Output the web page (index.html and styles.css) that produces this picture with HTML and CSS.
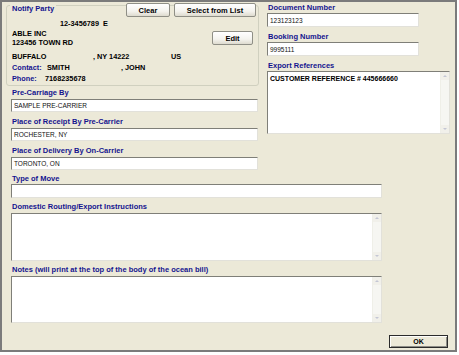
FILE: index.html
```html
<!DOCTYPE html>
<html lang="en">
<head>
    <meta charset="UTF-8">
    <title>Ocean Bill - Parties</title>
    <link rel="stylesheet" href="styles.css">
</head>
<body>
    <div class="window">
        <div class="top">
            <div class="left-col">
                <div class="group">
                    <div class="group-head">
                        <span class="group-title">Notify Party</span>
                        <button class="btn btn-clear">Clear</button>
                        <button class="btn btn-select">Select from List</button>
                    </div>
                    <div class="party-id">12-3456789&nbsp;&nbsp;E</div>
                    <div class="party-name">
                        <div class="addr">
                            <div>ABLE INC</div>
                            <div>123456 TOWN RD</div>
                        </div>
                        <button class="btn btn-edit">Edit</button>
                    </div>
                    <div class="party-rows">
                        <div class="prow">
                            <span class="city">BUFFALO</span>
                            <span class="state">, NY 14222</span>
                            <span>US</span>
                        </div>
                        <div class="prow">
                            <span class="key key-contact">Contact:</span>
                            <span class="last">SMITH</span>
                            <span>, JOHN</span>
                        </div>
                        <div class="prow">
                            <span class="key key-phone">Phone:</span>
                            <span>7168235678</span>
                        </div>
                    </div>
                </div>

                <div class="fields">
                    <label class="lbl first">Pre-Carriage By</label>
                    <div class="field">SAMPLE PRE-CARRIER</div>
                    <label class="lbl">Place of Receipt By Pre-Carrier</label>
                    <div class="field">ROCHESTER, NY</div>
                    <label class="lbl">Place of Delivery By On-Carrier</label>
                    <div class="field">TORONTO, ON</div>
                </div>
            </div>

            <div class="right-col">
                <label class="lbl first">Document Number</label>
                <div class="field short">123123123</div>
                <label class="lbl">Booking Number</label>
                <div class="field short">9995111</div>
                <label class="lbl">Export References</label>
                <div class="area area-refs">
                    <div class="area-text bold">CUSTOMER REFERENCE # 445666660</div>
                    <div class="scroll"><span class="arrow up"></span><span class="arrow down"></span></div>
                </div>
            </div>
        </div>

        <div class="bottom">
            <label class="lbl">Type of Move</label>
            <div class="field wide"></div>
            <label class="lbl">Domestic Routing/Export Instructions</label>
            <div class="area area-routing">
                <div class="area-text"></div>
                <div class="scroll"><span class="arrow up"></span><span class="arrow down"></span></div>
            </div>
            <label class="lbl">Notes (will print at the top of the body of the ocean bill)</label>
            <div class="area area-notes">
                <div class="area-text"></div>
                <div class="scroll"><span class="arrow up"></span><span class="arrow down"></span></div>
            </div>
        </div>

        <div class="actions">
            <button class="btn-ok">OK</button>
        </div>
    </div>
</body>
</html>
```

FILE: styles.css
```css
body {
    margin: 0;
    background: #fff;
    font-family: "Liberation Sans", Arial, sans-serif;
    color: #000;
}
.window {
    width: 453px;
    height: 348px;
    border: 2px solid #7b7b7b;
    background: #ece9d8;
}
.top {
    display: flex;
    padding-top: 1px;
}
.left-col {
    margin-left: 4px;
    width: 253px;
}
.group {
    margin-top: 2px;
    padding-bottom: 1px;
    border: 1px solid #d0d0bf;
    border-radius: 3px;
    font-size: 7.3px;
    font-weight: bold;
}
.group-head {
    display: flex;
    align-items: flex-start;
    height: 14px;
    margin-top: -3px;
}
.group-title {
    margin-left: 3px;
    padding: 0 2px;
    line-height: 12px;
    background: #ece9d8;
    color: #14148f;
    font-size: 7.5px;
}
.btn {
    height: 14px;
    padding: 0;
    border: 1px solid #8f8f86;
    border-radius: 2px;
    background: linear-gradient(#ffffff, #f4f3ee 60%, #dedbcf);
    font-family: "Liberation Sans", Arial, sans-serif;
    font-size: 7.5px;
    font-weight: bold;
    color: #000;
}
.btn-clear {
    margin-left: auto;
    width: 44px;
}
.btn-select {
    width: 82px;
    margin-left: 4px;
    margin-right: 2px;
}
.party-id {
    margin-top: 2px;
    line-height: 10px;
    padding-left: 53px;
}
.party-name {
    display: flex;
    justify-content: space-between;
    align-items: flex-start;
    padding-left: 5px;
    line-height: 9px;
}
.btn-edit {
    width: 41px;
    margin-top: 2px;
    margin-right: 5px;
}
.party-rows {
    margin-top: 4px;
    padding-left: 5px;
}
.prow {
    display: flex;
    line-height: 11px;
}
.city { width: 81px; }
.state { width: 78px; }
.key { color: #14148f; }
.key-contact { width: 35px; }
.key-phone { width: 33px; }
.last { width: 74px; }

.fields {
    margin-left: 5px;
    width: 247px;
}
.lbl {
    display: block;
    margin-top: 5px;
    padding-left: 1px;
    line-height: 10px;
    font-size: 7.5px;
    font-weight: bold;
    color: #14148f;
    white-space: nowrap;
}
.fields .lbl.first { margin-top: 2px; }
.field {
    display: flex;
    align-items: center;
    box-sizing: border-box;
    height: 13px;
    margin-top: 1px;
    padding-left: 2px;
    background: #fff;
    border: 1px solid;
    border-color: #7f7f78 #e2e1da #e2e1da #7f7f78;
    font-size: 6.5px;
    color: #111;
}
.right-col {
    margin-left: 8px;
    width: 184px;
}
.right-col .lbl.first { margin-top: 0; }
.right-col .field {
    margin-top: 0;
    height: 14px;
}
.field.short { width: 152px; }

.area {
    display: flex;
    box-sizing: border-box;
    background: #fff;
    border: 1px solid;
    border-color: #7f7f78 #e2e1da #e2e1da #7f7f78;
}
.area-text {
    flex: 1;
    padding: 3px 2px;
    font-size: 7px;
    line-height: 8px;
}
.bold { font-weight: bold; }
.scroll {
    display: flex;
    flex-direction: column;
    justify-content: space-between;
    width: 8px;
    background: #f6f6f2;
    border-left: 1px solid #efefe8;
}
.arrow {
    display: block;
    height: 8px;
    background: #f1f0ea;
    position: relative;
}
.arrow::after {
    content: "";
    position: absolute;
    left: 2px;
    border-left: 2px solid transparent;
    border-right: 2px solid transparent;
}
.arrow.up::after {
    top: 3px;
    border-bottom: 2px solid #c4c6d4;
}
.arrow.down::after {
    top: 3px;
    border-top: 2px solid #c4c6d4;
}
.area-refs {
    width: 183px;
    height: 63px;
}
.bottom {
    padding-left: 9px;
}
.bottom .lbl { margin-top: 4px; }
.field.wide {
    width: 371px;
    height: 14px;
    margin-top: 0;
}
.area-routing {
    width: 371px;
    height: 48px;
    margin-top: 1px;
}
.area-notes {
    width: 371px;
    height: 47px;
    margin-top: 1px;
}
.actions {
    display: flex;
    justify-content: flex-end;
    margin-top: 12px;
    padding-right: 7px;
}
.btn-ok {
    width: 59px;
    height: 13px;
    padding: 0;
    border: 1px solid #2b2b2b;
    box-shadow: inset 1px 1px #fdfdfb, inset -1px -1px #8c8c86;
    background: #ece9d8;
    font-family: "Liberation Sans", Arial, sans-serif;
    font-size: 7px;
    font-weight: bold;
    color: #000;
}
```
